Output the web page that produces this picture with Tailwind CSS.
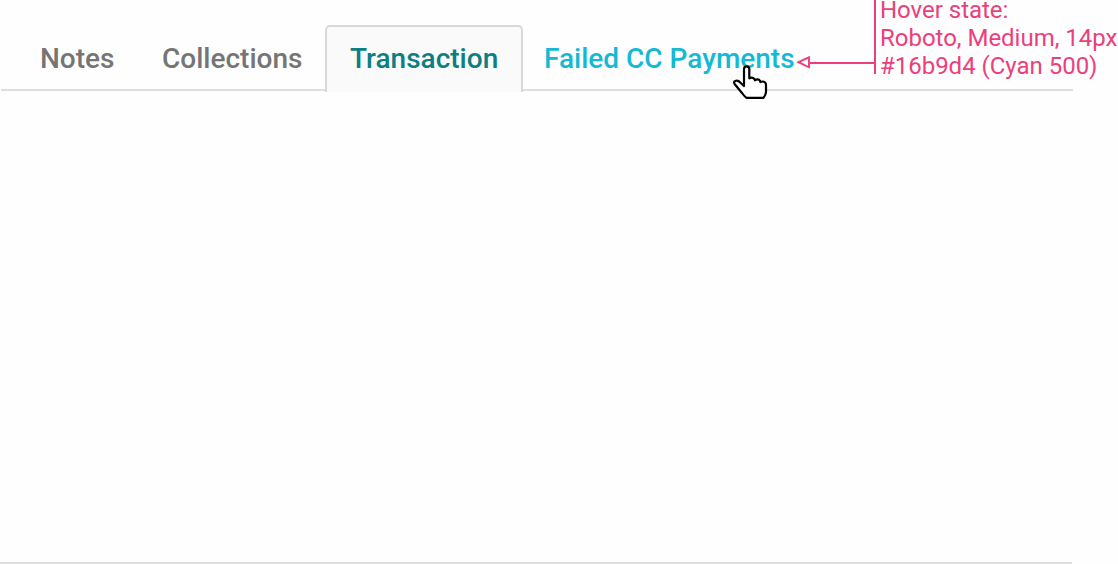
<!DOCTYPE html>
<html lang="en">
<head>
<meta charset="utf-8">
<title>Tabs hover state</title>
<script src="https://cdn.jsdelivr.net/npm/@tailwindcss/browser@4"></script>
</head>
<body class="relative h-[564px] w-[1118px] overflow-hidden bg-[#fefefe] font-['Roboto',sans-serif]">
  <main class="flex h-[564px] w-[1072px] flex-col border-b-2 border-[#dedede]">
    <nav class="ml-px flex h-[91px] w-[1072px] items-end border-b-2 border-[#dedede] pl-[39px] text-[28px] leading-[32px] font-medium whitespace-nowrap text-[#757575]">
      <a class="mb-[14px] w-[122px]">Notes</a>
      <a class="mb-[14px] w-[163px]">Collections</a>
      <a class="-mb-[3px] h-[67px] w-[198px] rounded-t-[5px] border-2 border-b-0 border-[#d8d8d8] bg-[#fafafa] pt-[16px] pl-[23px] text-[#0d7e83]">Transaction</a>
      <a class="mb-[14px] ml-[21px] text-[#16b9d4]">Failed CC Payments</a>
    </nav>
  </main>
  <aside class="absolute top-0 left-[874px] h-[74px] border-l-2 border-[#ec407a] pl-1 text-[24px] leading-[28px] tracking-[-0.02px] whitespace-nowrap text-[#ec407a]">
    <p class="leading-[20px]">Hover state:</p>
    <p class="mt-1">Roboto, Medium, 14px</p>
    <p>#16b9d4 (Cyan 500)</p>
  </aside>
  <svg class="absolute top-[54px] left-[794px]" width="82" height="16" viewBox="0 0 82 16" fill="none" stroke="#ec407a" stroke-width="2"><path d="M15.5 9H81"/><path d="M4.5 8.2L15 3.3V13.3Z" stroke-width="1.9"/></svg>
  <svg class="absolute top-[64px] left-[731px]" width="38" height="36" viewBox="0 0 38 36" fill="#fff" stroke="#000" stroke-width="2.2" stroke-linejoin="round" stroke-linecap="round"><path d="M13 22V5Q13 2.3 15.6 2.3Q18.3 2.3 18.3 5V14.3Q20 13.2 22.5 14.2Q23.8 14.8 23.8 16.3Q26 14.6 28 15.8Q29.3 16.6 29.3 18.1Q32 16.8 34 18.3Q35.2 19.3 35 22V28Q34.8 31 32.5 33.8H15.5Q13 32 11 29L4 20.5Q2 17.8 4.3 17Q7 16 9.5 18.7Z"/></svg>
</body>
</html>
